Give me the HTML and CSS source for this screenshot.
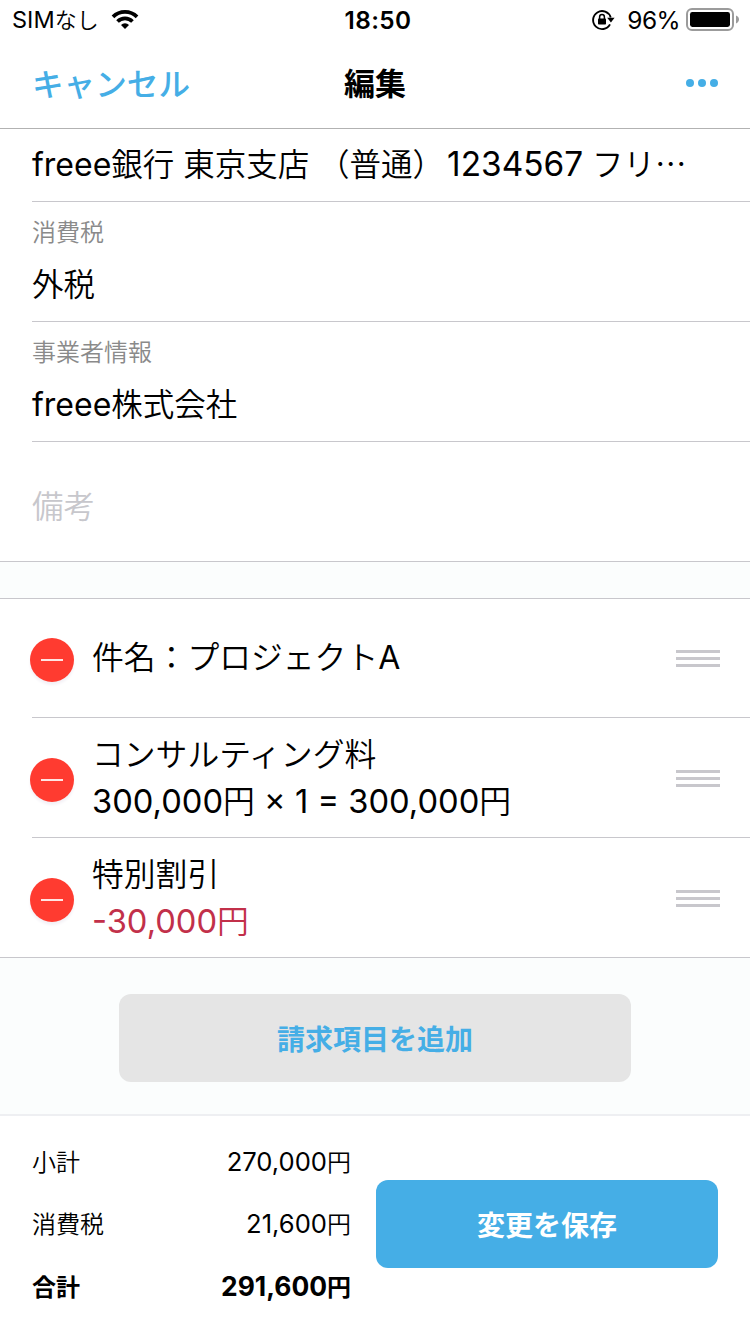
FILE: index.html
```html
<!DOCTYPE html>
<html lang="ja">
<head>
<meta charset="utf-8">
<title>編集</title>
<link rel="stylesheet" href="styles.css">
</head>
<body>
<div class="screen">
  <div class="status">
    <div class="status-left">
      <span class="carrier"><span class="sim">SIM</span>なし</span>
      <svg class="wifi" width="28" height="21" viewBox="0 0 30 22">
        <g fill="none" stroke="#000" stroke-width="4">
          <path d="M2.1 8.200a18.300 18.300 0 0 1 25.800 0"/>
          <path d="M7 13.100a11.400 11.400 0 0 1 16 0"/>
        </g>
        <path d="M15 21.200l-4.300-4.400a6.200 6.200 0 0 1 8.600 0z"/>
      </svg>
    </div>
    <span class="time">18:50</span>
    <div class="status-right">
      <svg class="lock" width="24" height="22" viewBox="0 0 24 22">
        <g fill="none" stroke="#000">
          <path d="M19.700 8.500A9 9 0 1 0 19 15.400" stroke-width="1.9"/>
          <path d="M8.600 10V8a2.400 2.400 0 0 1 4.800 0v2" stroke-width="1.5"/>
        </g>
        <rect x="7" y="9.400" width="8" height="6.100" rx=".8"/>
        <path d="M16.200 8.700h7.400l-3.700 4.800z"/>
      </svg>
      <span class="percent">96%</span>
      <svg class="battery" width="54" height="24" viewBox="0 0 54 24">
        <rect x="1" y="1" width="46" height="21" rx="5" fill="none" stroke="#9b9b9b" stroke-width="2"/>
        <rect x="4" y="4" width="40" height="15" rx="2.4"/>
        <path d="M50 7.600c4 1.200 4 6.600 0 7.800z" fill="#9b9b9b"/>
      </svg>
    </div>
  </div>
  <header class="nav">
    <span class="cancel">キャンセル</span>
    <h1 class="title">編集</h1>
    <span class="more"><i></i><i></i><i></i></span>
  </header>
  <section class="fields">
    <div class="field bank"><p class="value"><span class="la">freee</span>銀行 東京支店 （普通）<span class="num">1234567</span> フリ⋯</p></div>
    <div class="field"><p class="label">消費税</p><p class="value">外税</p></div>
    <div class="field"><p class="label">事業者情報</p><p class="value"><span class="la">freee</span>株式会社</p></div>
    <div class="field memo"><p class="value">備考</p></div>
  </section>
  <section class="items">
    <div class="item">
      <span class="remove"></span>
      <div class="body single"><p>件名：プロジェクト<span class="la">A</span></p></div>
      <span class="grip"></span>
    </div>
    <div class="item">
      <span class="remove"></span>
      <div class="body"><p>コンサルティング料</p><p><span class="amt">300,000</span>円<span class="amt calc"> × 1 = 300,000</span>円</p></div>
      <span class="grip"></span>
    </div>
    <div class="item">
      <span class="remove"></span>
      <div class="body"><p>特別割引</p><p class="minus"><span class="amt">-30,000</span>円</p></div>
      <span class="grip"></span>
    </div>
  </section>
  <div class="add-area"><div class="button add">請求項目を追加</div></div>
  <footer class="footer">
    <div class="totals">
      <div class="total"><span>小計</span><span><span class="sum">270,000</span>円</span></div>
      <div class="total"><span>消費税</span><span><span class="sum">21,600</span>円</span></div>
      <div class="total grand"><span>合計</span><span><span class="sum">291,600</span>円</span></div>
    </div>
    <div class="button save">変更を保存</div>
  </footer>
</div>
</body>
</html>
```
FILE: styles.css
```css
* { box-sizing: border-box; }
body { margin: 0; background: #fff; color: #000; font-family: Inter, "Noto Sans CJK JP", sans-serif; font-weight: 350; }
p, h1 { margin: 0; }
.screen { width: 750px; height: 1334px; display: flex; flex-direction: column; overflow: hidden; background: #fbfdfd; }
.status { height: 40px; display: grid; grid-template-columns: 1fr auto 1fr; align-items: center; padding: 0 10px 0 12px; line-height: 38px; background: #fff; }
.status-left, .status-right { display: flex; align-items: center; }
.status-right { justify-content: flex-end; }
.carrier { font-size: 22px; white-space: nowrap; }
.sim { font-weight: 400; font-size: 23.5px; }
.wifi { margin: 0 0 2px 12px; }
.time { font-weight: 600; font-size: 24.3px; letter-spacing: .4px; padding: 0 0 0 4px; }
.lock { margin-bottom: 1px; }
.percent { font-weight: 400; font-size: 24.5px; letter-spacing: -.6px; margin: 0 6px 0 12px; }
.nav { height: 89px; border-bottom: 1px solid #b2b2b2; display: grid; grid-template-columns: 1fr auto 1fr; align-items: center; padding: 0 32px 3px; background: #fff; }
.cancel { color: #45aee6; font-size: 31.6px; font-weight: 500; margin-top: -2px; }
.title { font-size: 31px; font-weight: 700; margin-top: -2px; }
.more { display: flex; gap: 4px; justify-content: flex-end; padding-top: 1px; }
.more i { width: 8px; height: 8px; border-radius: 50%; background: #45aee6; }
.fields { padding-left: 32px; border-bottom: 1px solid #c8c7cc; background: #fff; }
.field { height: 120px; border-bottom: 1px solid #c8c7cc; padding-top: 13px; }
.field.bank { height: 73px; padding-top: 12px; }
.field.memo { border-bottom: 0; padding-top: 42px; height: 119px; }
.label { font-size: 24px; line-height: 36px; color: #8a8a8a; }
.value { font-size: 31.5px; line-height: 46px; white-space: nowrap; }
.label + .value { margin-top: 11px; }
.memo .value { color: #c7c7cc; }
.la, .num, .amt, .sum { font-weight: 400; }
.la { font-size: 32px; }
.num { font-size: 33.4px; margin-left: 3px; }
.amt { font-size: 32.7px; }
.items { margin-top: 36px; border-top: 1px solid #c8c7cc; border-bottom: 1px solid #c8c7cc; padding-left: 32px; background: #fff; }
.item { height: 120px; display: flex; align-items: center; border-bottom: 1px solid #c8c7cc; padding-right: 30px; }
.item:first-child { height: 119px; }
.item:last-child { height: 119px; border-bottom: 0; }
.remove { width: 44px; height: 44px; margin: 3px 18px 0 -2px; border-radius: 50%; background: #ff3b30; display: grid; place-items: center; box-shadow: 0 3px 3px #f4f1f6; }
.remove::before { content: ""; width: 22px; height: 2px; background: #ffe5e3; }
.item + .item .remove { margin-top: 5px; }
.body { flex: 1; font-size: 31.8px; line-height: 47px; white-space: nowrap; }
.single { padding-bottom: 2px; }
.minus { color: #c2304a; }
.grip { width: 44px; height: 17px; border-top: 3px solid #c8c7cc; border-bottom: 3px solid #c8c7cc; padding: 4px 0; background: #c8c7cc content-box; }
.item + .item .grip { margin-top: 2px; }
.add-area { height: 156px; padding-top: 36px; }
.button { height: 88px; border-radius: 12px; display: flex; align-items: center; justify-content: center; font-size: 28px; font-weight: 700; }
.add { width: 512px; margin-left: 119px; background: #e5e5e5; color: #45aee6; }
.footer { flex: 1; border-top: 2px solid #eeeff2; background: #fff; display: flex; padding: 13px 32px 0; }
.totals { width: 319px; margin-right: 25px; font-size: 24px; }
.total { display: flex; justify-content: space-between; align-items: center; height: 62.5px; }
.sum { font-size: 25.6px; }
.grand, .grand .sum { font-weight: 700; }
.grand .sum { font-size: 26.4px; }
.save { width: 342px; margin-top: 51px; background: #45aee6; color: #fff; }
```
